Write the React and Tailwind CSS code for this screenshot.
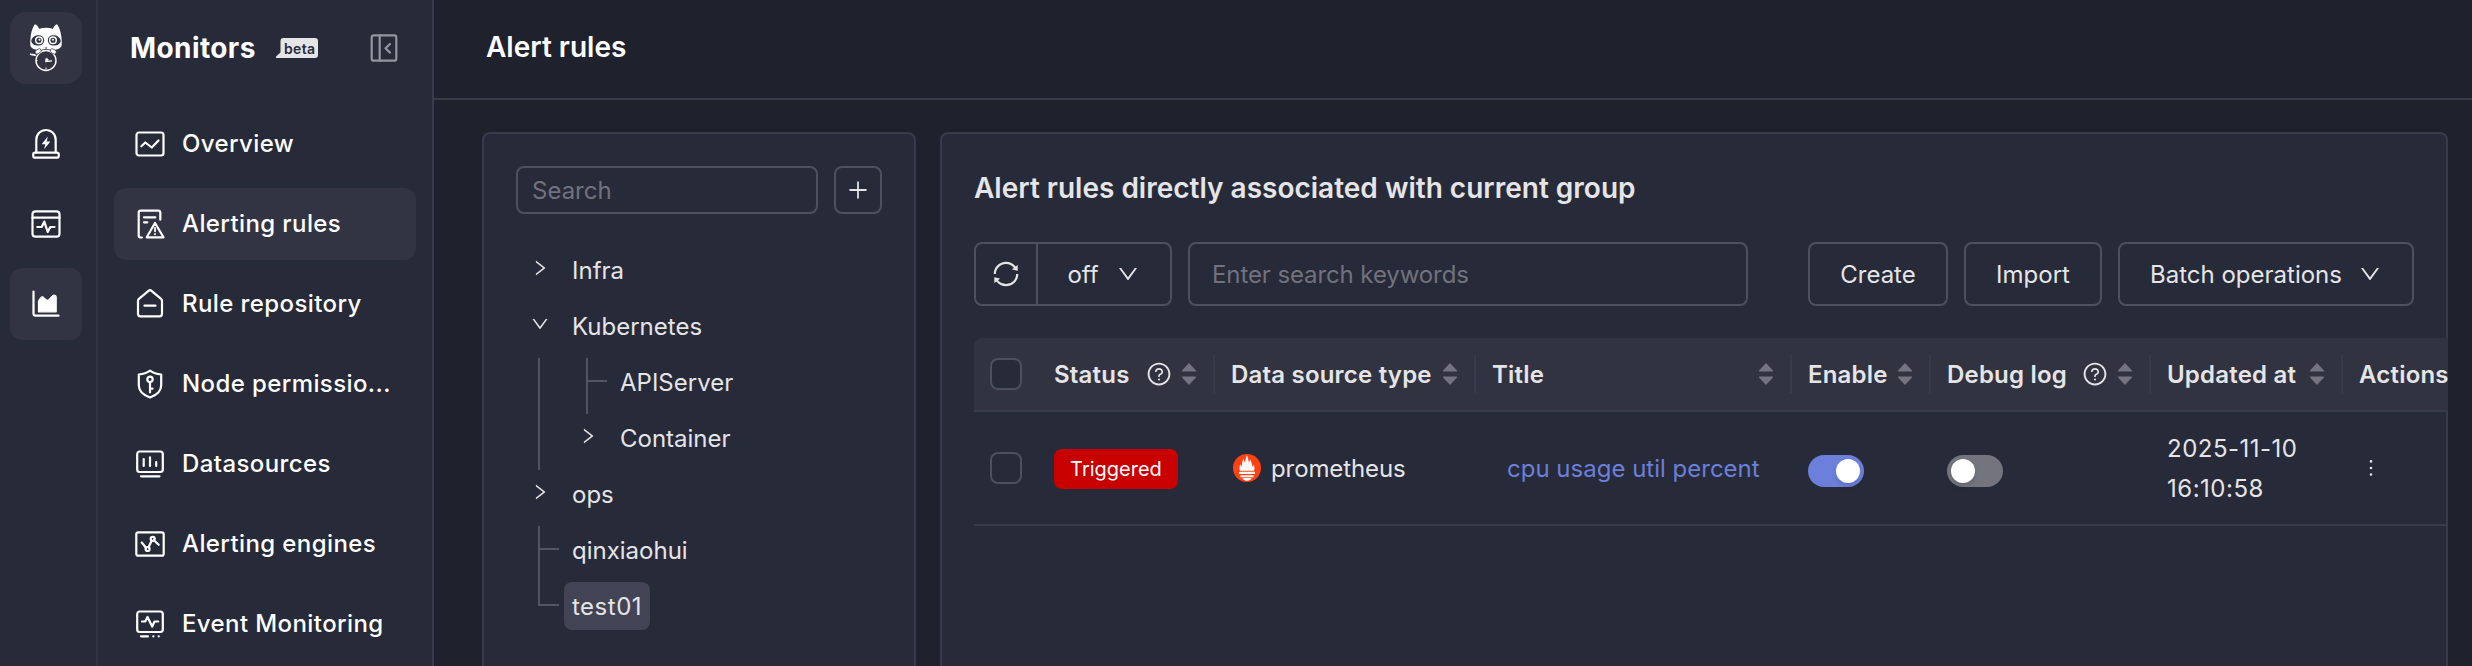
import {
  AiOutlineDown,
  AiOutlineMore,
  AiOutlinePlus,
  AiOutlineQuestionCircle,
  AiOutlineRight,
  AiOutlineSync,
} from 'react-icons/ai'

function Icon({ children, className = 'w-8 h-8' }) {
  return (
    <svg
      viewBox="0 0 32 32"
      fill="none"
      stroke="currentColor"
      strokeWidth="2.2"
      strokeLinecap="round"
      strokeLinejoin="round"
      className={`shrink-0 ${className}`}
    >
      {children}
    </svg>
  )
}

function Logo() {
  return (
    <svg viewBox="0 0 36 50" className="w-9 h-[50px]">
      <path
        d="M7 1.2C5 3.5 3 9 2.6 14 2.2 18 2 21 2.6 23.5 4 26 8 27 12 27h12c4 0 8-1 9.4-3.5.6-2.5.4-5.5 0-9.5C33 9 31 3.5 29 1.2c-1.5.3-3.2 2.3-4.2 4.6C20 4.4 16 4.4 11.2 5.8 10.2 3.5 8.5 1.5 7 1.2Z"
        fill="#fff"
      />
      <path d="M3.3 17.5c.8-3.5 4.2-5.5 8-5.2 3.2.2 5 2.4 4.9 5.2-.2 3-2.4 5-5.6 5.1-3.9.1-7.3-1.6-7.3-5.1Z" fill="#333443" />
      <path d="M32.7 17.5c-.8-3.5-4.2-5.5-8-5.2-3.2.2-5 2.4-4.9 5.2.2 3 2.4 5 5.6 5.1 3.9.1 7.3-1.6 7.3-5.1Z" fill="#333443" />
      <circle cx="11" cy="17.3" r="3.3" fill="#333443" stroke="#fff" strokeWidth="1.5" />
      <circle cx="25" cy="17.3" r="3.3" fill="#333443" stroke="#fff" strokeWidth="1.5" />
      <circle cx="11.5" cy="16.8" r="1" fill="#fff" />
      <circle cx="25" cy="16.8" r="1" fill="#fff" />
      <path d="M16.5 24.5h3L18 26Z" fill="#333443" />
      <circle cx="18" cy="37.5" r="11.5" fill="#333443" />
      <circle cx="18" cy="37.5" r="10" fill="none" stroke="#fff" strokeWidth="1.4" />
      <path d="M18 35.5v3l6-.6" fill="none" stroke="#fff" strokeWidth="1.4" />
      <path d="M18.5 34.5l2.3 2.3-3 2.4Z" fill="#fff" />
      <path d="M18 44.5v2M9.5 37.5h-1.5" stroke="#fff" strokeWidth="1" />
      <ellipse cx="10.2" cy="28.4" rx="3.4" ry="2.1" transform="rotate(-35 10.2 28.4)" fill="#fff" stroke="#333443" strokeWidth=".7" />
      <ellipse cx="25.3" cy="28.4" rx="3.4" ry="2.1" transform="rotate(35 25.3 28.4)" fill="#fff" stroke="#333443" strokeWidth=".7" />
      <path d="M2.5 31.2c1.5.5 3 .4 4.7 1" fill="none" stroke="#fff" strokeWidth="1.6" strokeLinecap="round" />
    </svg>
  )
}

const railItems = [
  {
    key: 'oncall',
    icon: (
      <Icon>
        <path d="M6.3 24.3V11.7a9.7 9.7 0 0 1 19.4 0v12.6" />
        <rect x="3.2" y="24.7" width="25.6" height="5" rx="2" />
        <path d="M17.8 8.5 11.7 16.2h3.6l-1.2 5 6.3-7.7h-3.7Z" fill="currentColor" stroke="none" />
      </Icon>
    ),
  },
  {
    key: 'rum',
    icon: (
      <Icon>
        <rect x="2.5" y="3.3" width="27" height="25.4" rx="3" />
        <path d="M2.5 9.7h27M7.3 19h4.4l2.6-5.4 3.4 10.4 2.6-5h4.2" />
      </Icon>
    ),
  },
  {
    key: 'monitors',
    active: true,
    icon: (
      <Icon>
        <path d="M3.5 3.5v22a2.2 2.2 0 0 0 2.2 2.2H28.5" />
        <path
          d="M8.5 13.5c0-.8 2.5-4.5 3.5-4.8 1.5-.3 3.5 3.6 5.5 3.6 2.2 0 4.5-5.3 6-5.3 1.8 0 2.7.5 2.7 2V23.8H8.5Z"
          fill="currentColor"
          strokeWidth="1.2"
        />
      </Icon>
    ),
  },
]

const navItems = [
  {
    label: 'Overview',
    icon: (
      <Icon>
        <rect x="2.5" y="4.5" width="27" height="23" rx="2.5" />
        <path d="M7.3 18.3l4-3.8 6.5 5 6.7-7" />
      </Icon>
    ),
  },
  {
    label: 'Alerting rules',
    active: true,
    icon: (
      <Icon>
        <path d="M8 29.5H6.7a2 2 0 0 1-2-2V4.7a2 2 0 0 1 2-2h17.6a2 2 0 0 1 2 2v7M10 9.3h11.3M10 14.3h3.3M21 15l8.5 14.3H12.7Z" />
        <path d="M21 19.8v3.5M21 26v.3" strokeWidth="1.8" />
      </Icon>
    ),
  },
  {
    label: 'Rule repository',
    icon: (
      <Icon>
        <path d="M4 12.8a2.5 2.5 0 0 1 .9-1.9L14.5 2.8a2.3 2.3 0 0 1 3 0l9.6 8.1a2.5 2.5 0 0 1 .9 1.9v13a2.5 2.5 0 0 1-2.5 2.5h-19A2.5 2.5 0 0 1 4 25.8ZM10.5 17.7h11" />
      </Icon>
    ),
  },
  {
    label: 'Node permissio...',
    icon: (
      <Icon>
        <path d="M16 2.7c3.2 2.4 6.7 3.5 11.2 3.8v10.8c0 6-4.7 9.9-11.2 12.2C9.5 27.2 4.8 23.3 4.8 17.3V6.5C9.3 6.2 12.8 5.1 16 2.7Z" />
        <circle cx="16" cy="11.3" r="2.7" />
        <path d="M16 14v10.3M16 20.7h2.5" />
      </Icon>
    ),
  },
  {
    label: 'Datasources',
    icon: (
      <Icon>
        <rect x="3.2" y="3.5" width="25.6" height="20.5" rx="2.5" />
        <path d="M9.7 11v7M16 9.3v8.7M22.2 14v4M7 28.3h18.5" />
      </Icon>
    ),
  },
  {
    label: 'Alerting engines',
    icon: (
      <Icon>
        <rect x="2.3" y="4.3" width="27.4" height="23.4" rx="2" />
        <path d="M7.7 14.5l4.3 5.3M14.6 19.3l3-6.5M20 12.3l4.7 4.5" />
        <circle cx="13.6" cy="21" r="2" />
        <circle cx="18.7" cy="10.8" r="2" />
      </Icon>
    ),
  },
  {
    label: 'Event Monitoring',
    icon: (
      <Icon>
        <rect x="3.2" y="3.5" width="25.6" height="20.5" rx="2.5" />
        <path d="M8 13.5h3.2l2.3-4.5 4.7 9.5 2.3-5h3.7M7 28.3h7M19.3 28.3h.1M24.7 28.3h.1" />
      </Icon>
    ),
  },
]

const treeNodes = [
  { name: 'Infra', state: 'closed' },
  { name: 'Kubernetes', state: 'open' },
  { name: 'APIServer', indent: true, state: 'leaf' },
  { name: 'Container', indent: true, state: 'closed' },
  { name: 'ops', state: 'closed' },
  { name: 'qinxiaohui', state: 'leaf' },
  { name: 'test01', state: 'last', selected: true },
]

function Switcher({ state }) {
  if (state === 'leaf' || state === 'last') {
    return (
      <div className="w-12 shrink-0 flex pl-[22px]">
        <div className={`w-[2px] bg-[#53545f] ${state === 'last' ? 'h-6' : 'h-14'}`}></div>
        <div className="w-[19px] h-[2px] mt-[22px] bg-[#53545f]"></div>
      </div>
    )
  }
  return (
    <div className="w-12 h-12 shrink-0 flex items-center justify-center pb-1">
      {state === 'open' ? <AiOutlineDown size={20} /> : <AiOutlineRight size={20} />}
    </div>
  )
}

function TreeNode({ node }) {
  return (
    <div className="flex h-14">
      {node.indent && (
        <div className="w-12 shrink-0 pl-[22px]">
          <div className="w-[2px] h-14 bg-[#53545f]"></div>
        </div>
      )}
      <Switcher state={node.state} />
      <div
        className={`h-12 px-2 leading-[50px] rounded-lg ${node.selected ? 'bg-[#424354] tracking-[0.5px]' : ''}`}
      >
        {node.name}
      </div>
    </div>
  )
}

function Sorter() {
  return (
    <svg viewBox="0 0 14 22" className="w-[14px] h-[22px] shrink-0 fill-[#73747f]">
      <path d="M7 0l7 7.6a.5.5 0 0 1-.4.8H.4A.5.5 0 0 1 0 7.6Z" />
      <path d="M7 22l7-7.6a.5.5 0 0 0-.4-.8H.4a.5.5 0 0 0-.4.8Z" />
    </svg>
  )
}

function HeadCell({ title, width, help, last }) {
  return (
    <div className={`${width} shrink-0 flex items-center pl-4`}>
      <span className="pt-0.5 font-semibold tracking-[0.2px] whitespace-nowrap">{title}</span>
      {!last && (
        <>
          <div className="ml-auto mr-[17px] flex items-center gap-[11px]">
            {help && <AiOutlineQuestionCircle size={26} className="-mr-px" />}
            <Sorter />
          </div>
          <div className="w-[2px] h-[38px] bg-[#393b4c]"></div>
        </>
      )}
    </div>
  )
}

function Checkbox() {
  return <div className="w-8 h-8 rounded-lg border-2 border-[#4d4e5e] bg-[#272a38]"></div>
}

function Toggle({ on }) {
  return (
    <div className={`w-14 h-8 mt-1.5 p-1 rounded-full flex ${on ? 'bg-[#6b7fdb] justify-end' : 'bg-[#74747f]'}`}>
      <div className="w-6 h-6 rounded-full bg-white shadow-md"></div>
    </div>
  )
}

function PrometheusIcon() {
  return (
    <svg viewBox="0 0 28 28" className="w-7 h-7 shrink-0">
      <circle cx="14" cy="14" r="14" fill="#fe4211" />
      <path
        d="M7.2 16.8C6 15 6.3 12.5 7.3 10.2c.3 1.3.9 2.2 1.5 2.8-.4-3 .9-5.4 1.3-8.2 1.3 1.6 1.5 3.3 1.7 4.5C12.3 6.6 12.6 4.5 13.8 1.5c1.5 1.8 1.5 5 2.2 7.5.4-1.6.5-2.5 1.2-3.8.4 2.6 2.5 4.6 2 7.8.7-.7 1.1-1.6 1.3-2.6 1.1 2.2 1.4 4.6.3 6.4Z"
        fill="#fff"
      />
      <path d="M6 17.8h16v2.3H6ZM7.5 21.2h13v2h-13ZM9.5 24h9c-.5 1.7-2 2.8-4.5 2.8S10 25.7 9.5 24Z" fill="#fff" />
    </svg>
  )
}

function Button({ children, className }) {
  return (
    <button
      className={`h-16 shrink-0 flex items-center justify-center gap-4 rounded-lg border-2 border-[#4f505e] ${className}`}
    >
      {children}
    </button>
  )
}

export default function App() {
  return (
    <div className="flex w-[2472px] h-[666px] overflow-hidden bg-[#1f212d] text-[#e5e5e8] text-2xl font-['Inter',sans-serif]">
      <aside className="w-[98px] shrink-0 border-r-2 border-[#333443] bg-[#272a38] text-white pl-[10px] pt-3">
        <div className="w-[72px] h-[72px] mb-6 rounded-2xl bg-[#333443] flex items-center justify-center">
          <Logo />
        </div>
        <div className="flex flex-col gap-2">
          {railItems.map((item) => (
            <div
              key={item.key}
              className={`w-[72px] h-[72px] rounded-xl flex items-center justify-center ${item.active ? 'bg-[#333443]' : ''}`}
            >
              {item.icon}
            </div>
          ))}
        </div>
      </aside>

      <nav className="w-[336px] shrink-0 border-r-2 border-[#393b4c] bg-[#272a38] text-white">
        <div className="h-24 flex items-center pl-8 pr-8">
          <h2 className="pt-0.5 text-[28px] font-bold tracking-[0.4px]">Monitors</h2>
          <svg viewBox="0 0 42 20" className="w-[42px] h-5 ml-5">
            <path d="M0 20v-1.5l4.5-4V3a3 3 0 0 1 3-3H39a3 3 0 0 1 3 3v14a3 3 0 0 1-3 3Z" fill="#e5e5e8" />
            <text x="8" y="15.5" fontSize="14" fontWeight="600" textLength="31" fill="#272a38">beta</text>
          </svg>
          <Icon className="w-8 h-8 ml-auto text-[#95959e]">
            <rect x="3.7" y="3.3" width="24.6" height="25.4" rx="2" />
            <path d="M11.7 3.3v25.4M22 12l-4.5 4.3L22 20.6" />
          </Icon>
        </div>
        <div className="pl-4 pt-3 flex flex-col gap-2">
          {navItems.map((item) => (
            <div
              key={item.label}
              className={`w-[302px] h-[72px] pl-5 rounded-xl flex items-center gap-4 ${item.active ? 'bg-[#333443]' : ''}`}
            >
              {item.icon}
              <span className="whitespace-nowrap font-medium tracking-[0.4px]">{item.label}</span>
            </div>
          ))}
        </div>
      </nav>

      <main className="flex-1 min-w-0 flex flex-col">
        <header className="h-[100px] shrink-0 border-b-2 border-[#393b4c] pl-[52px] pb-0.5 flex items-center">
          <h1 className="text-[28px] font-semibold text-white">Alert rules</h1>
        </header>

        <div className="flex gap-6 pl-12 pr-6 pt-8">
          <section className="w-[434px] h-[600px] shrink-0 rounded-lg border-2 border-[#393b4c] bg-[#272a38] p-8">
            <div className="flex gap-4 mb-8">
              <input
                placeholder="Search"
                className="w-[302px] h-12 px-[14px] rounded-lg border-2 border-[#4f505e] placeholder:text-[#71727d] outline-none"
              />
              <button className="w-12 h-12 rounded-lg border-2 border-[#4f505e] flex items-center justify-center">
                <AiOutlinePlus size={24} />
              </button>
            </div>
            {treeNodes.map((node) => (
              <TreeNode key={node.name} node={node} />
            ))}
          </section>

          <section className="w-[1508px] h-[600px] shrink-0 rounded-lg border-2 border-[#393b4c] bg-[#272a38] pl-8 pt-8">
            <h3 className="text-[28px] leading-[44px] font-semibold">
              Alert rules directly associated with current group
            </h3>

            <div className="mt-8 pr-8 flex gap-4">
              <div className="w-[198px] h-16 shrink-0 rounded-lg border-2 border-[#4f505e] flex">
                <div className="w-[62px] border-r-2 border-[#4f505e] flex items-center justify-center">
                  <AiOutlineSync size={30} />
                </div>
                <div className="flex-1 flex items-center justify-center gap-[17px] pr-px">
                  <span className="pt-0.5">off</span>
                  <AiOutlineDown size={24} />
                </div>
              </div>
              <input
                placeholder="Enter search keywords"
                className="w-[560px] h-16 px-[22px] rounded-lg border-2 border-[#4f505e] placeholder:text-[#71727d] tracking-[-0.1px] outline-none"
              />
              <div className="ml-auto flex gap-4">
                <Button className="w-[140px] pt-0.5">Create</Button>
                <Button className="w-[138px] pt-0.5">Import</Button>
                <Button className="w-[296px]">
                  <span className="pt-0.5">Batch operations</span>
                  <AiOutlineDown size={24} />
                </Button>
              </div>
            </div>

            <div className="mt-8 w-[1474px] overflow-hidden rounded-tl-lg">
              <div className="flex h-[74px] bg-[#323340] border-b-2 border-[#393b4c]">
                <div className="w-16 shrink-0 flex items-center justify-center">
                  <Checkbox />
                </div>
                <HeadCell title="Status" width="w-[177px]" help />
                <HeadCell title="Data source type" width="w-[261px]" />
                <HeadCell title="Title" width="w-[316px]" />
                <HeadCell title="Enable" width="w-[139px]" />
                <HeadCell title="Debug log" width="w-[220px]" help />
                <HeadCell title="Updated at" width="w-[192px]" />
                <HeadCell title="Actions" width="w-[105px]" last />
              </div>
              <div className="flex h-[114px] items-center border-b-2 border-[#393b4c]">
                <div className="w-16 shrink-0 flex items-center justify-center">
                  <Checkbox />
                </div>
                <div className="w-[177px] shrink-0 pl-4">
                  <span className="mt-0.5 w-[124px] h-10 rounded-lg bg-[#c80000] text-white text-xl flex items-center justify-center">
                    Triggered
                  </span>
                </div>
                <div className="w-[261px] shrink-0 pl-[18px] flex items-center gap-[10px]">
                  <PrometheusIcon />
                  <span className="pt-0.5 tracking-[-0.1px]">prometheus</span>
                </div>
                <div className="w-[316px] shrink-0 pl-[31px] pt-0.5 text-[#6b7fdb]">cpu usage util percent</div>
                <div className="w-[139px] shrink-0 pl-4">
                  <Toggle on />
                </div>
                <div className="w-[220px] shrink-0 pl-4">
                  <Toggle />
                </div>
                <div className="w-[192px] shrink-0 pl-4 pr-6 pt-0.5 leading-10 tracking-[0.5px]">
                  2025-11-10 16:10:58
                </div>
                <div className="w-[105px] shrink-0 pl-4">
                  <AiOutlineMore size={24} />
                </div>
              </div>
            </div>
          </section>
        </div>
      </main>
    </div>
  )
}
